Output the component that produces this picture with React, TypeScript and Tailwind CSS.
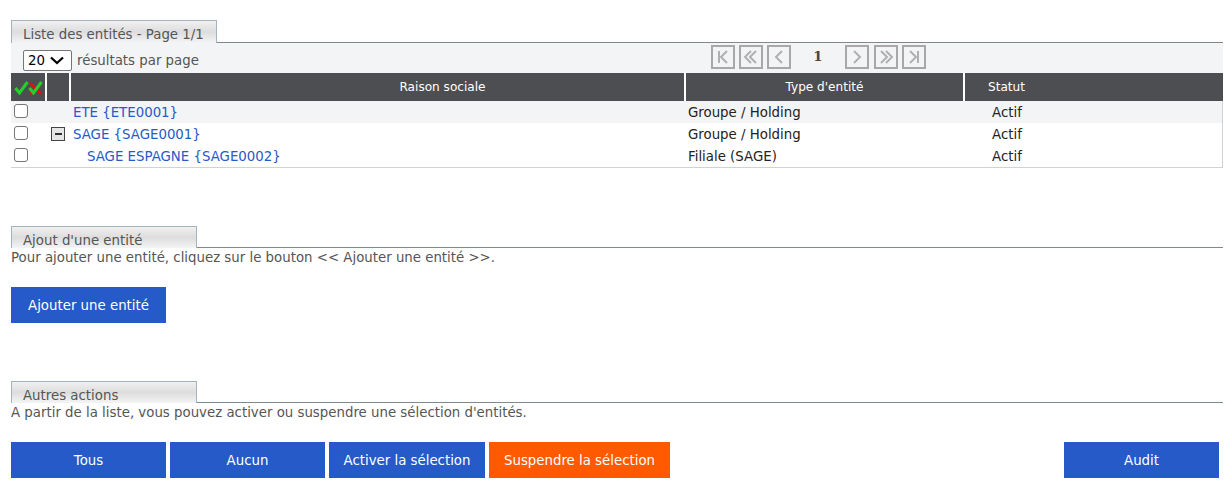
const rows = [
  { label: "ETE {ETE0001}", type: "Groupe / Holding", status: "Actif", bg: "bg-[#f3f4f6]", tree: false, indent: "pl-[1px]" },
  { label: "SAGE {SAGE0001}", type: "Groupe / Holding", status: "Actif", bg: "bg-white", tree: true, indent: "pl-[1px]" },
  { label: "SAGE ESPAGNE {SAGE0002}", type: "Filiale (SAGE)", status: "Actif", bg: "bg-white", tree: false, indent: "pl-[15px]" },
]

function Tab({ label, width, height }: { label: string; width: string; height: string }) {
  return (
    <div className={`flex items-end border-b border-[#7f8a8e] ${height}`}>
      <div
        className={`${width} ${height} -mb-px border-t border-l border-r border-[#a3b5bd] bg-gradient-to-b from-[#f0f0f0] via-[#dddddd] to-[#f4f4f4] pl-[11px] pt-[6px] text-[13.33px] leading-[15px] text-[#555]`}
      >
        {label}
      </div>
    </div>
  )
}

function PageButton({ d, className = "" }: { d: string; className?: string }) {
  return (
    <div className={`w-[24px] h-[24px] border-2 border-[#a8a8a8] bg-[#f3f4f6] flex items-center justify-center ${className}`}>
      <svg width="20" height="20" viewBox="0 0 20 20" fill="none" stroke="#b0b0b0" strokeWidth="2">
        <path d={d} />
      </svg>
    </div>
  )
}

function ActionButton({ label, width, color = "bg-[#255ac8]" }: { label: string; width: string; color?: string }) {
  return (
    <button className={`${width} ${color} h-[36px] pt-[2px] text-[13.33px] text-white`}>{label}</button>
  )
}

function Check({ color, cross }: { color: string; cross?: boolean }) {
  return (
    <svg width="15" height="15" viewBox="0 0 15 15" fill="none" className="-mr-px">
      {cross && <path d="M2 3 L13 14 M13 3 L2 14" stroke="#e01010" strokeWidth="2.5" />}
      <path d="M1.5 8 L5.5 13 L13.5 2" stroke={color} strokeWidth="3" />
    </svg>
  )
}

function Box() {
  return <div className="w-[14px] h-[14px] border border-[#767676] rounded-[3px] bg-white" />
}

export default function App() {
  return (
    <div className="w-[1232px] h-[496px] bg-white pl-[11px] pr-[9px] pt-[20px] font-['DejaVu_Sans',Verdana,sans-serif] overflow-hidden">
      <Tab label="Liste des entités - Page 1/1" width="w-[206px]" height="h-[23px]" />

      <div className="relative h-[30px] bg-[#f3f4f6] flex items-center pl-[12px] pt-[5px]">
        <div className="w-[49px] h-[21px] border border-[#767676] rounded-[2px] bg-white flex items-center pl-[4px] gap-[5px] text-[13.33px] text-black">
          20
          <svg width="14" height="9" viewBox="0 0 14 9" fill="none" stroke="#000" strokeWidth="2.2">
            <path d="M1 1.5L7 7L13 1.5" />
          </svg>
        </div>
        <span className="ml-[5px] text-[13.33px] text-[#555]">résultats par page</span>
        <div className="absolute left-[700px] top-[2px] flex items-center gap-[4px]">
          <PageButton d="M6 4V16M14 4L8 10L14 16" />
          <PageButton d="M10 4L4 10L10 16M15 4L9 10L15 16" />
          <PageButton d="M13 4L7 10L13 16" />
          <span className="w-[46px] text-center text-[13.33px] font-bold text-[#444] font-['DejaVu_Serif',serif]">1</span>
          <PageButton d="M7 4L13 10L7 16" />
          <PageButton d="M5 4L11 10L5 16M10 4L16 10L10 16" className="ml-[1px]" />
          <PageButton d="M14 4V16M6 4L12 10L6 16" />
        </div>
      </div>

      <div className="border-b border-x border-[#cfd3d6]">
        <div className="flex h-[28px] bg-[#4d4e52] text-white text-[12.1px] -mx-px">
          <div className="w-[36px] border-r-2 border-white flex items-center pl-[3px]">
            <Check color="#22d02a" />
            <Check color="#22d02a" cross />
          </div>
          <div className="w-[24px] border-r-2 border-white" />
          <div className="w-[615px] border-r-2 border-white flex items-center justify-center pl-[130px] pt-[1px]">Raison sociale</div>
          <div className="w-[279px] border-r-2 border-white flex items-center justify-center pt-[1px]">Type d'entité</div>
          <div className="w-[83px] flex items-center justify-center pt-[1px]">Statut</div>
        </div>
        {rows.map((r) => (
          <div key={r.label} className={`flex h-[22px] items-center text-[13.33px] -ml-px ${r.bg}`}>
            <div className="w-[35px] pl-[3px] pb-[2px]"><Box /></div>
            <div className="w-[26px] pl-[5px] flex">
              {r.tree && (
                <div className="w-[14px] h-[14px] border border-[#444] bg-[#e6e6e6] flex items-center justify-center">
                  <div className="w-[7px] h-[2px] bg-[#333]" />
                </div>
              )}
            </div>
            <div className={`w-[615px] pt-[1px] text-[#255ac8] ${r.indent}`}>{r.label}</div>
            <div className="w-[305px] pl-[1px] pt-[1px] text-[#222]">{r.type}</div>
            <div className="pt-[1px] text-[#222]">{r.status}</div>
          </div>
        ))}
      </div>

      <div className="mt-[58px]">
        <Tab label="Ajout d'une entité" width="w-[186px]" height="h-[22px]" />
        <p className="mt-[1px] text-[13.33px] leading-[17px] text-[#555]">
          Pour ajouter une entité, cliquez sur le bouton &lt;&lt; Ajouter une entité &gt;&gt;.
        </p>
        <div className="mt-[21px]">
          <ActionButton label="Ajouter une entité" width="w-[155px]" />
        </div>
      </div>

      <div className="mt-[58px]">
        <Tab label="Autres actions" width="w-[186px]" height="h-[22px]" />
        <p className="mt-[1px] text-[13.33px] leading-[17px] text-[#555]">
          A partir de la liste, vous pouvez activer ou suspendre une sélection d'entités.
        </p>
        <div className="mt-[21px] flex gap-[4px]">
          <ActionButton label="Tous" width="w-[155px]" />
          <ActionButton label="Aucun" width="w-[155px]" />
          <ActionButton label="Activer la sélection" width="w-[156px]" />
          <ActionButton label="Suspendre la sélection" width="w-[181px]" color="bg-[#ff5a00]" />
          <ActionButton label="Audit" width="w-[155px] ml-auto mr-[4px]" />
        </div>
      </div>
    </div>
  )
}
